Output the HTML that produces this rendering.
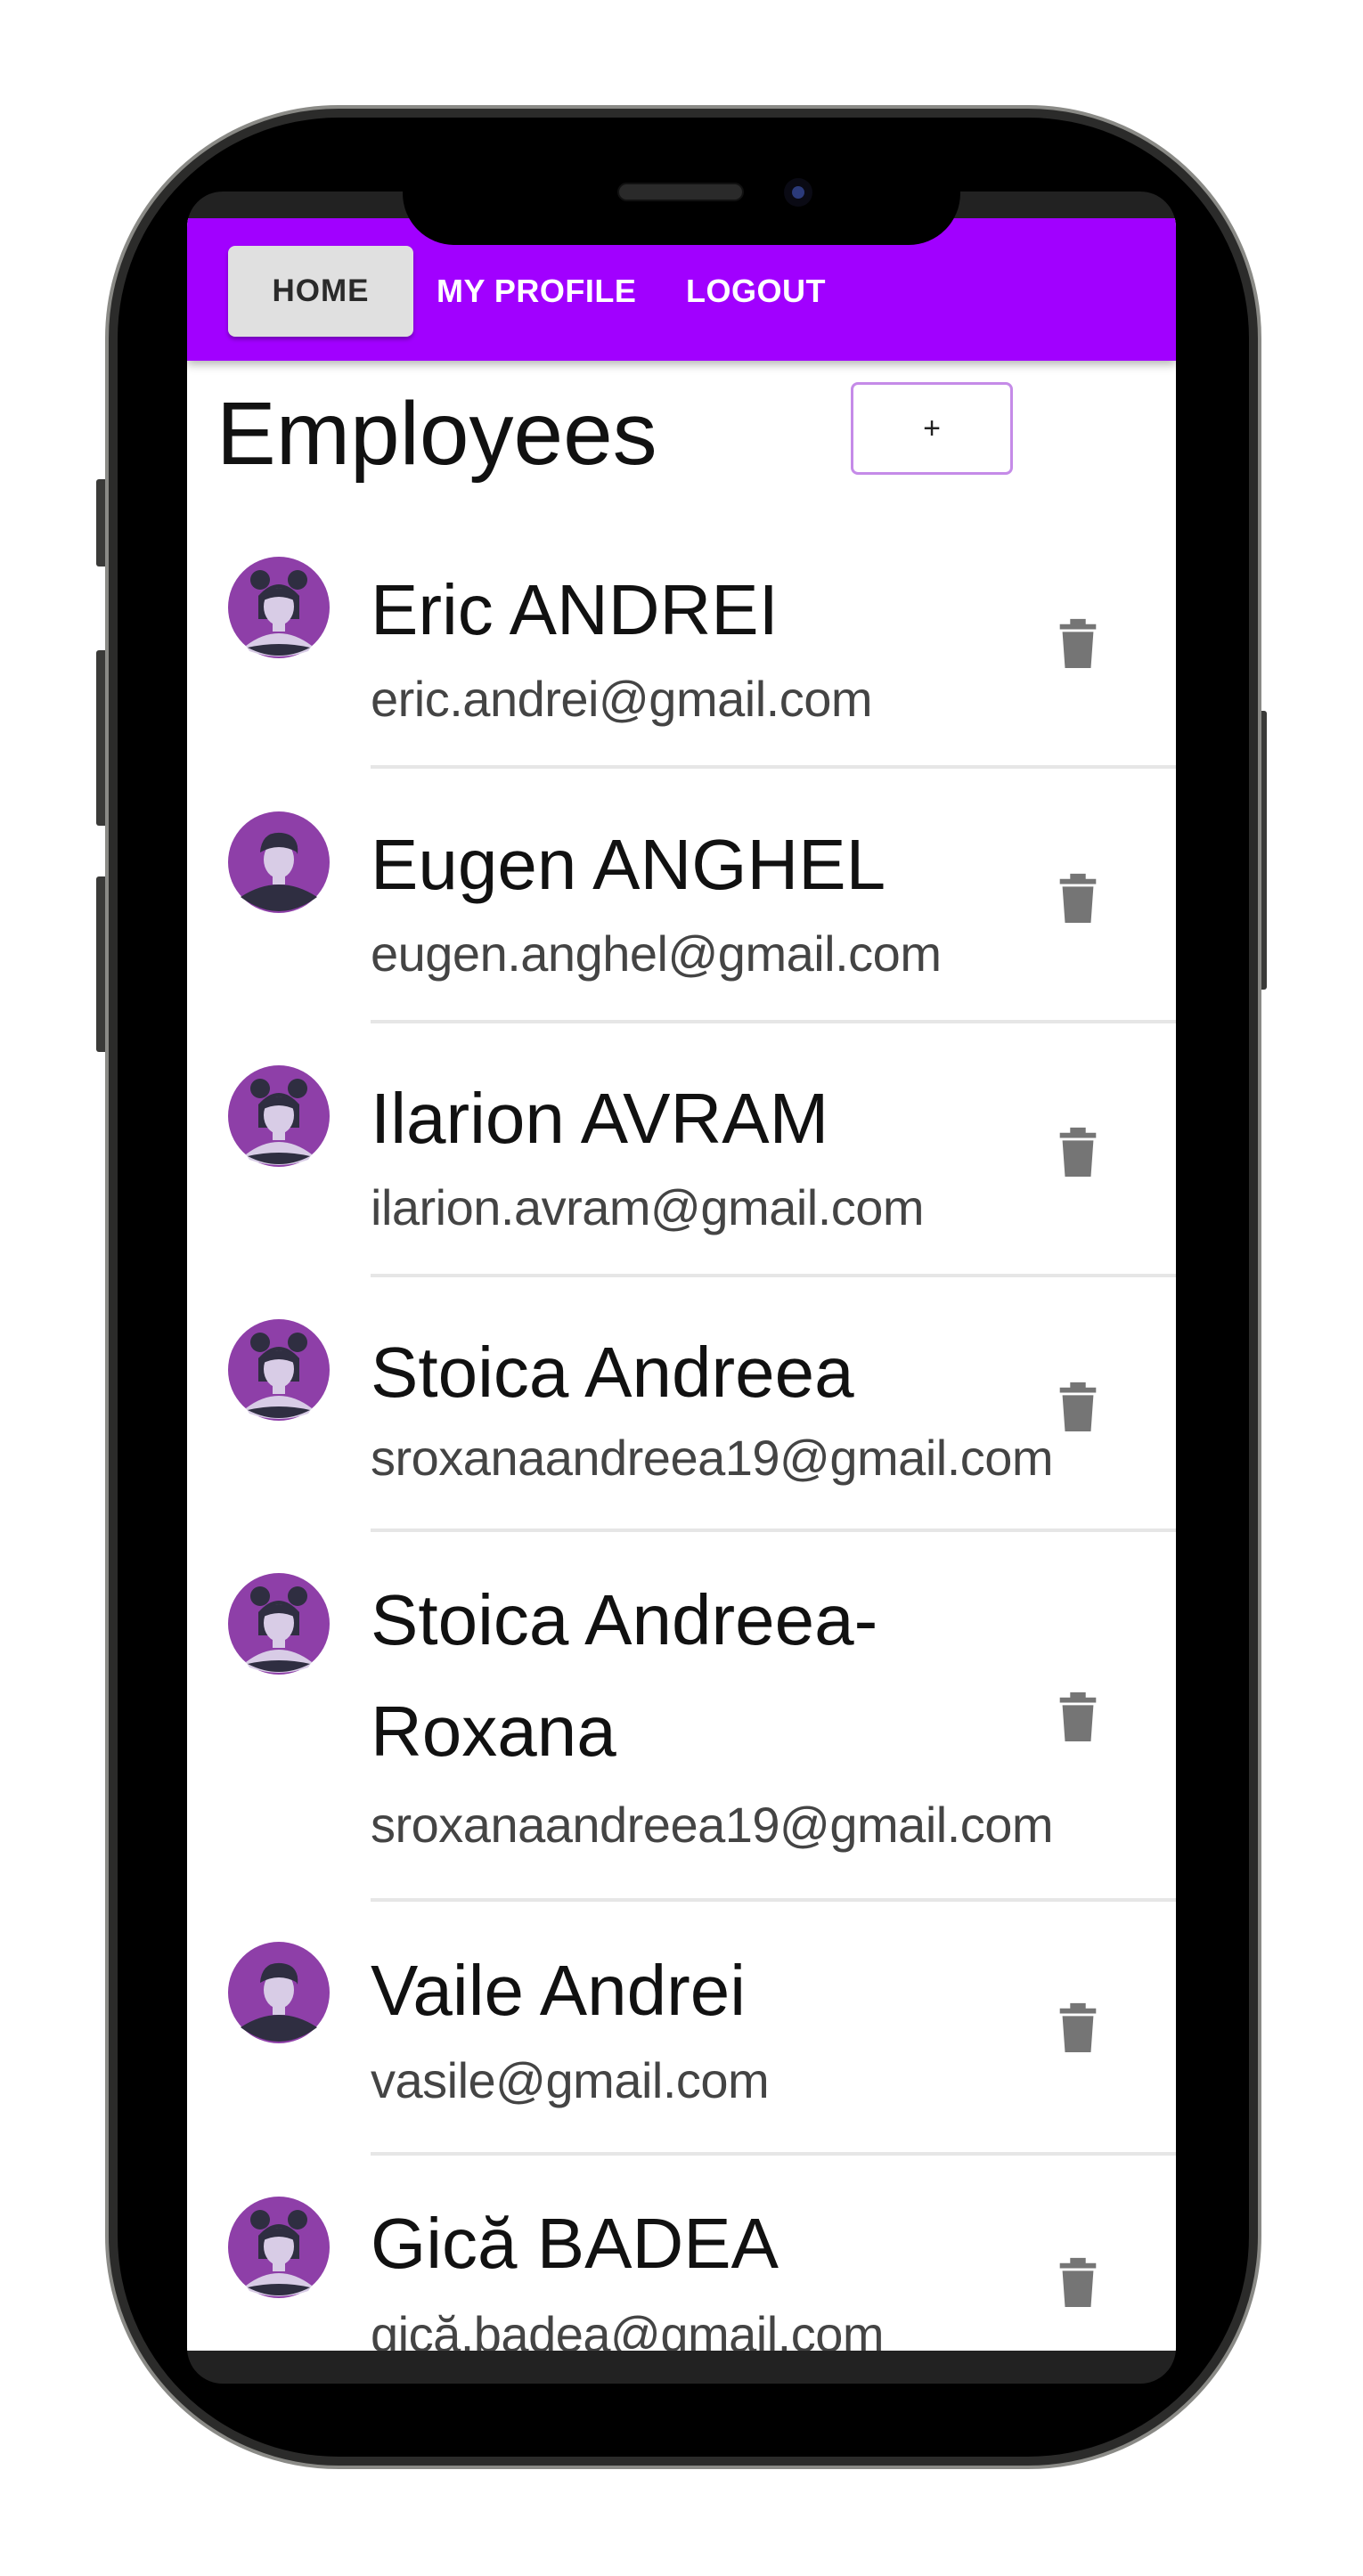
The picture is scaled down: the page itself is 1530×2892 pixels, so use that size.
<!DOCTYPE html>
<html><head><meta charset="utf-8"><style>
*{margin:0;padding:0;box-sizing:border-box}
body{width:1530px;height:2892px;background:#fff;position:relative;overflow:hidden;font-family:"Liberation Sans",sans-serif}
.abs{position:absolute}
.btn{background:#3a3a38;border-radius:3px}
.name{position:absolute;left:416px;font-size:80px;line-height:1;color:#111;white-space:nowrap}
.mail{position:absolute;left:416px;font-size:56px;line-height:1;color:#444;white-space:nowrap;letter-spacing:-0.5px}
.div{position:absolute;left:416px;right:0;height:4px;background:#e6e6e6}
.av{position:absolute;left:256px;width:114px;height:114px}
.tr{position:absolute;left:1186px;width:48px;height:58px}
</style></head><body>
<div class="abs btn" style="left:108px;top:538px;width:14px;height:98px"></div>
<div class="abs btn" style="left:108px;top:730px;width:14px;height:197px"></div>
<div class="abs btn" style="left:108px;top:984px;width:14px;height:197px"></div>
<div class="abs btn" style="left:1410px;top:798px;width:12px;height:313px"></div>
<div class="abs" style="left:118px;top:118px;width:1298px;height:2654px;border-radius:262px;background:#2b2b2a;border:4px solid #8a8a86"></div>
<div class="abs" style="left:132px;top:132px;width:1270px;height:2626px;border-radius:248px;background:#000"></div>
<div class="abs" style="left:210px;top:215px;width:1110px;height:2461px;border-radius:40px;background:#222;overflow:hidden">
  <div class="abs" style="left:0;top:30px;width:1110px;height:2394px;background:#fff;overflow:hidden">
    <div class="abs" style="left:0;top:0;width:1110px;height:160px;background:#a100ff;box-shadow:0 4px 10px rgba(0,0,0,.3)"></div>
    <div class="abs" style="left:46px;top:31px;width:208px;height:102px;background:#e0e0e0;border-radius:8px;box-shadow:0 3px 5px rgba(0,0,0,.3);font-size:35px;font-weight:bold;color:#2a2a2a;text-align:center;line-height:102px;letter-spacing:1px">HOME</div>
    <div class="abs" style="left:280px;top:62px;font-size:36px;font-weight:bold;color:#fff;line-height:40px;letter-spacing:.5px">MY PROFILE</div>
    <div class="abs" style="left:560px;top:62px;font-size:36px;font-weight:bold;color:#fff;line-height:40px;letter-spacing:.5px">LOGOUT</div>
    <div class="abs" style="left:33px;top:192px;font-size:100px;line-height:1;color:#111">Employees</div>
    <div class="abs" style="left:745px;top:184px;width:182px;height:104px;border:3px solid #c58be8;border-radius:8px;text-align:center;line-height:98px;font-size:34px;color:#222">+</div>
  </div>
</div>
<div class="abs" style="left:210px;top:405px;width:1110px;height:2234px;overflow:hidden">
 <div class="abs" style="left:-210px;top:-405px;width:1530px;height:2892px">
  <svg width="0" height="0" style="position:absolute"><defs>
   <symbol id="f" viewBox="0 0 114 114"><circle cx="57" cy="57" r="57" fill="#8e3fa8"/><circle cx="36" cy="26" r="11" fill="#2f2e41"/><circle cx="78" cy="26" r="11" fill="#2f2e41"/><path d="M34 44 Q57 18 80 44 L80 70 L34 70Z" fill="#2f2e41"/><ellipse cx="57" cy="56" rx="17" ry="21" fill="#d8cce6"/><path d="M34 44 Q57 26 80 44 L76 50 Q57 40 38 50Z" fill="#2f2e41"/><rect x="50" y="70" width="14" height="14" fill="#d8cce6"/><path d="M20 100 Q57 72 94 100 L90 106 Q57 118 24 106Z" fill="#d8cce6"/><path d="M22 102 Q57 94 92 102 Q57 120 22 102Z" fill="#2f2e41"/></symbol>
   <symbol id="m" viewBox="0 0 114 114"><circle cx="57" cy="57" r="57" fill="#8e3fa8"/><path d="M36 46 Q38 22 60 24 Q80 26 78 48 L74 40 Q57 34 40 42Z" fill="#2f2e41"/><ellipse cx="57" cy="54" rx="17" ry="21" fill="#d8cce6"/><path d="M36 46 Q38 24 60 26 Q80 28 78 46 Q57 34 36 46Z" fill="#2f2e41"/><rect x="50" y="70" width="14" height="12" fill="#d8cce6"/><path d="M14 96 Q57 68 100 96 Q57 128 14 96Z" fill="#2f2e41"/></symbol>
   <symbol id="t" viewBox="0 0 16 20"><path d="M1 3h14v2H1zM5 1h6v2H5zM2 6h12l-1 14H3z" fill="#757575"/></symbol>
  </defs></svg>

  <svg class="av" style="top:625px"><use href="#f"/></svg>
  <div class="name" style="top:645px">Eric ANDREI</div>
  <div class="mail" style="top:757px">eric.andrei@gmail.com</div>
  <svg class="tr" style="top:692px"><use href="#t"/></svg>
  <div class="div" style="top:859px"></div>

  <svg class="av" style="top:911px"><use href="#m"/></svg>
  <div class="name" style="top:931px">Eugen ANGHEL</div>
  <div class="mail" style="top:1043px">eugen.anghel@gmail.com</div>
  <svg class="tr" style="top:978px"><use href="#t"/></svg>
  <div class="div" style="top:1145px"></div>

  <svg class="av" style="top:1196px"><use href="#f"/></svg>
  <div class="name" style="top:1216px">Ilarion AVRAM</div>
  <div class="mail" style="top:1328px">ilarion.avram@gmail.com</div>
  <svg class="tr" style="top:1263px"><use href="#t"/></svg>
  <div class="div" style="top:1430px"></div>

  <svg class="av" style="top:1481px"><use href="#f"/></svg>
  <div class="name" style="top:1501px">Stoica Andreea</div>
  <div class="mail" style="top:1609px">sroxanaandreea19@gmail.com</div>
  <svg class="tr" style="top:1549px"><use href="#t"/></svg>
  <div class="div" style="top:1716px"></div>

  <svg class="av" style="top:1766px"><use href="#f"/></svg>
  <div class="name" style="top:1779px">Stoica Andreea-</div>
  <div class="name" style="top:1904px">Roxana</div>
  <div class="mail" style="top:2021px">sroxanaandreea19@gmail.com</div>
  <svg class="tr" style="top:1897px"><use href="#t"/></svg>
  <div class="div" style="top:2131px"></div>

  <svg class="av" style="top:2180px"><use href="#m"/></svg>
  <div class="name" style="top:2195px">Vaile Andrei</div>
  <div class="mail" style="top:2308px">vasile@gmail.com</div>
  <svg class="tr" style="top:2246px"><use href="#t"/></svg>
  <div class="div" style="top:2416px"></div>

  <svg class="av" style="top:2466px"><use href="#f"/></svg>
  <div class="name" style="top:2479px">Gică BADEA</div>
  <div class="mail" style="top:2593px">gică.badea@gmail.com</div>
  <svg class="tr" style="top:2532px"><use href="#t"/></svg>
 </div>
</div>
<div class="abs" style="left:452px;top:180px;width:626px;height:95px;background:#000;border-radius:0 0 58px 58px"></div>
<div class="abs" style="left:693px;top:205px;width:142px;height:21px;background:#2a2a2a;border-radius:11px;border:2px solid #111"></div>
<div class="abs" style="left:880px;top:200px;width:32px;height:32px;background:#0a0a14;border-radius:50%"></div>
<div class="abs" style="left:889px;top:209px;width:14px;height:14px;background:#2b3a7a;border-radius:50%"></div>
</body></html>
